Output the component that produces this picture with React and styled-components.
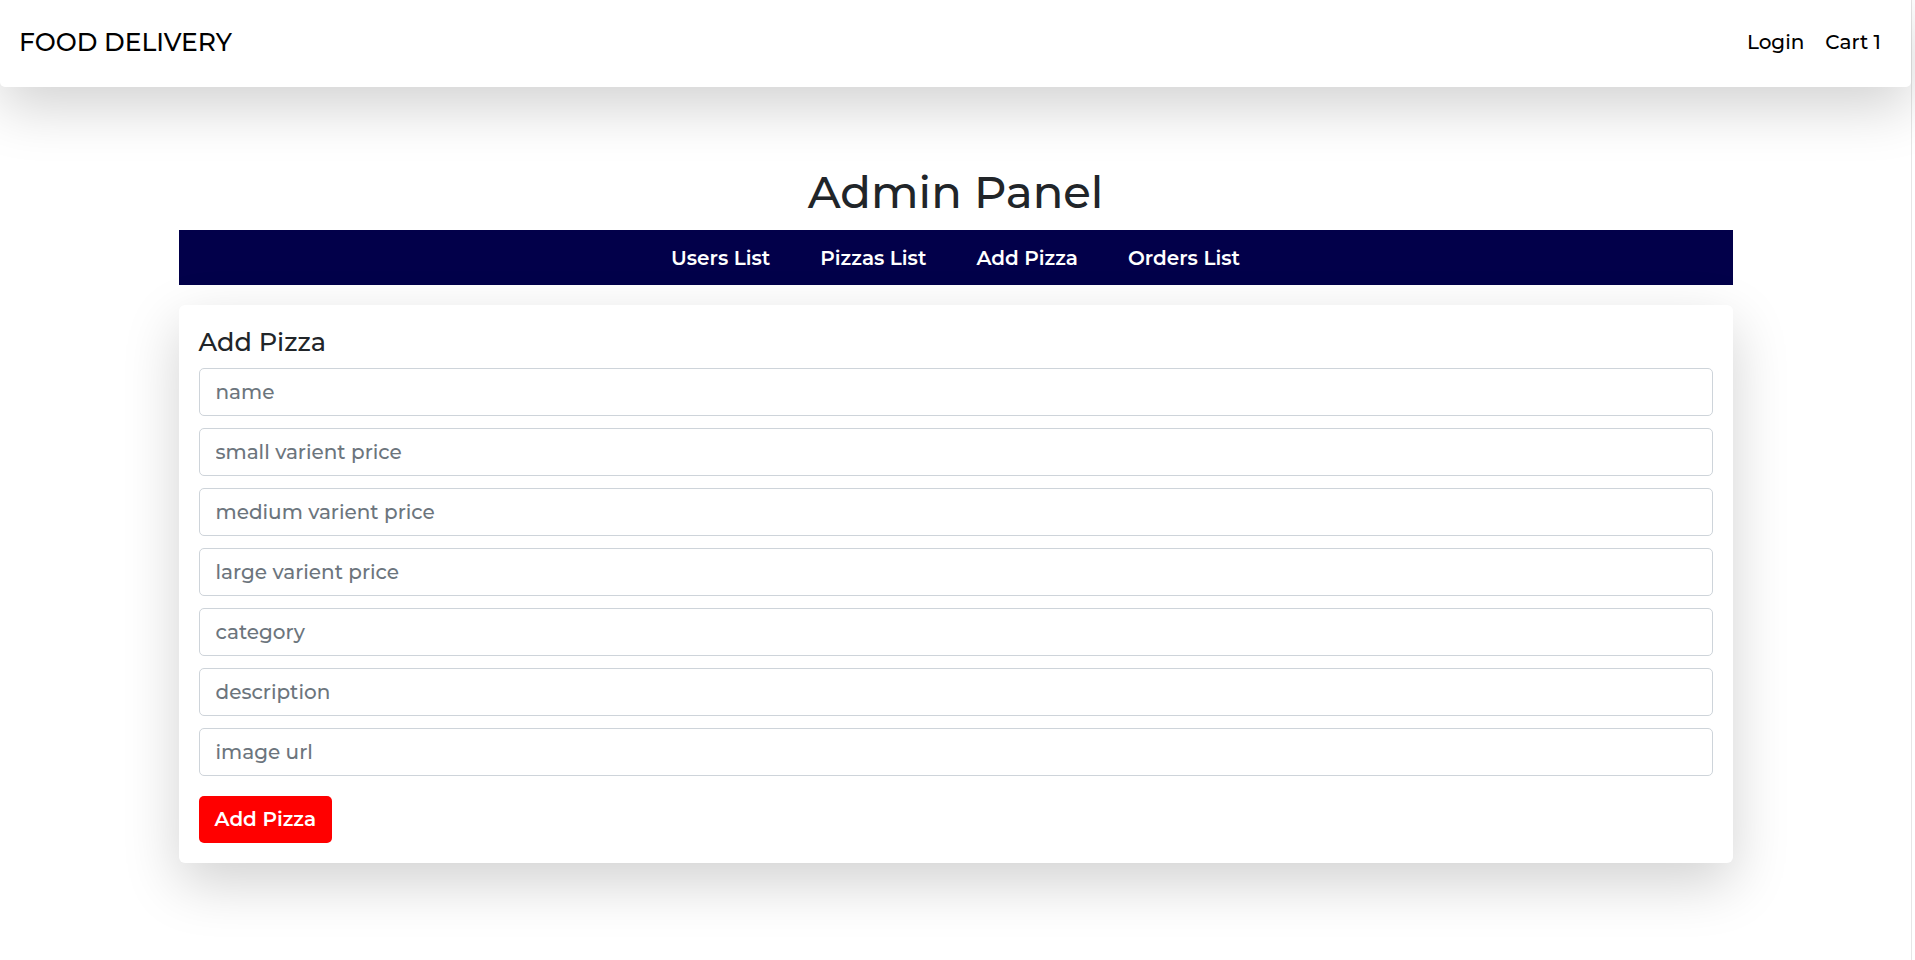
import React from "react";
import styled, { createGlobalStyle } from "styled-components";

const GlobalStyle = createGlobalStyle`
  * {
    box-sizing: border-box;
  }
  body {
    margin: 0;
    background: #ffffff;
    color: #212529;
    font-family: "Montserrat", "Open Sans", "Noto Sans", sans-serif;
  }
`;

const fields = [
  "name",
  "small varient price",
  "medium varient price",
  "large varient price",
  "category",
  "description",
  "image url",
];

const App = () => {
  return (
    <Page>
      <GlobalStyle />
      <StyledNav>
        <Brand>FOOD DELIVERY</Brand>
        <NavLinks>
          <NavLink>Login</NavLink>
          <NavLink>Cart 1</NavLink>
        </NavLinks>
      </StyledNav>
      <Main>
        <Title>Admin Panel</Title>
        <AdminBar>
          <AdminLink>Users List</AdminLink>
          <AdminLink>Pizzas List</AdminLink>
          <AdminLink>Add Pizza</AdminLink>
          <AdminLink>Orders List</AdminLink>
        </AdminBar>
        <Card>
          <CardTitle>Add Pizza</CardTitle>
          <Form onSubmit={(e) => e.preventDefault()}>
            {fields.map((f) => (
              <Input key={f} type="text" placeholder={f} />
            ))}
            <SubmitButton type="submit">Add Pizza</SubmitButton>
          </Form>
        </Card>
      </Main>
    </Page>
  );
};

const Page = styled.div`
  min-height: 960px;
  width: calc(100% - 3px);
  border-right: 1px solid #e6e6e6;
`;

const StyledNav = styled.nav`
  height: 87px;
  display: flex;
  align-items: center;
  justify-content: space-between;
  padding: 0 30px 4px 19px;
  background: #fff;
  border-radius: 0 0 5px 5px;
  box-shadow: 0 20px 56px rgba(0, 0, 0, 0.18);
`;

const Brand = styled.div`
  font-size: 25px;
  font-weight: 500;
  color: #000;
`;

const NavLinks = styled.div`
  display: flex;
  gap: 21px;
`;

const NavLink = styled.a`
  font-size: 20px;
  font-weight: 500;
  color: #000;
  cursor: pointer;
`;

const Main = styled.main`
  width: 1554px;
  margin: 0 auto;
  padding-top: 78px;
`;

const Title = styled.h1`
  margin: 0 0 11px;
  text-align: center;
  font-size: 45px;
  font-weight: 500;
  line-height: 1.2;
  color: #212529;
`;

const AdminBar = styled.div`
  height: 55px;
  background: #02004a;
  display: flex;
  align-items: center;
  justify-content: center;
  gap: 50px;
`;

const AdminLink = styled.a`
  color: #fff;
  font-size: 20px;
  font-weight: 600;
  cursor: pointer;
`;

const Card = styled.div`
  margin-top: 20px;
  background: #fff;
  border-radius: 6px;
  padding: 22px 20px 20px;
  box-shadow: 0 20px 56px rgba(0, 0, 0, 0.18);
`;

const CardTitle = styled.h4`
  margin: 0 0 10px;
  font-size: 25.5px;
  font-weight: 500;
  line-height: 1.2;
  color: #212529;
`;

const Form = styled.form`
  display: flex;
  flex-direction: column;
  align-items: flex-start;
  gap: 12px;
`;

const Input = styled.input`
  width: 100%;
  height: 48px;
  padding: 8px 16px;
  font-family: inherit;
  font-size: 20px;
  font-weight: 500;
  color: #495057;
  border: 1px solid #ced4da;
  border-radius: 5px;
  outline: none;
  &::placeholder {
    color: #6c757d;
  }
`;

const SubmitButton = styled.button`
  margin-top: 8px;
  height: 47px;
  padding: 0 16px;
  background: #ff0000;
  color: #fff;
  border: none;
  border-radius: 5px;
  font-family: inherit;
  font-size: 20px;
  font-weight: 600;
  cursor: pointer;
`;

export default App;
